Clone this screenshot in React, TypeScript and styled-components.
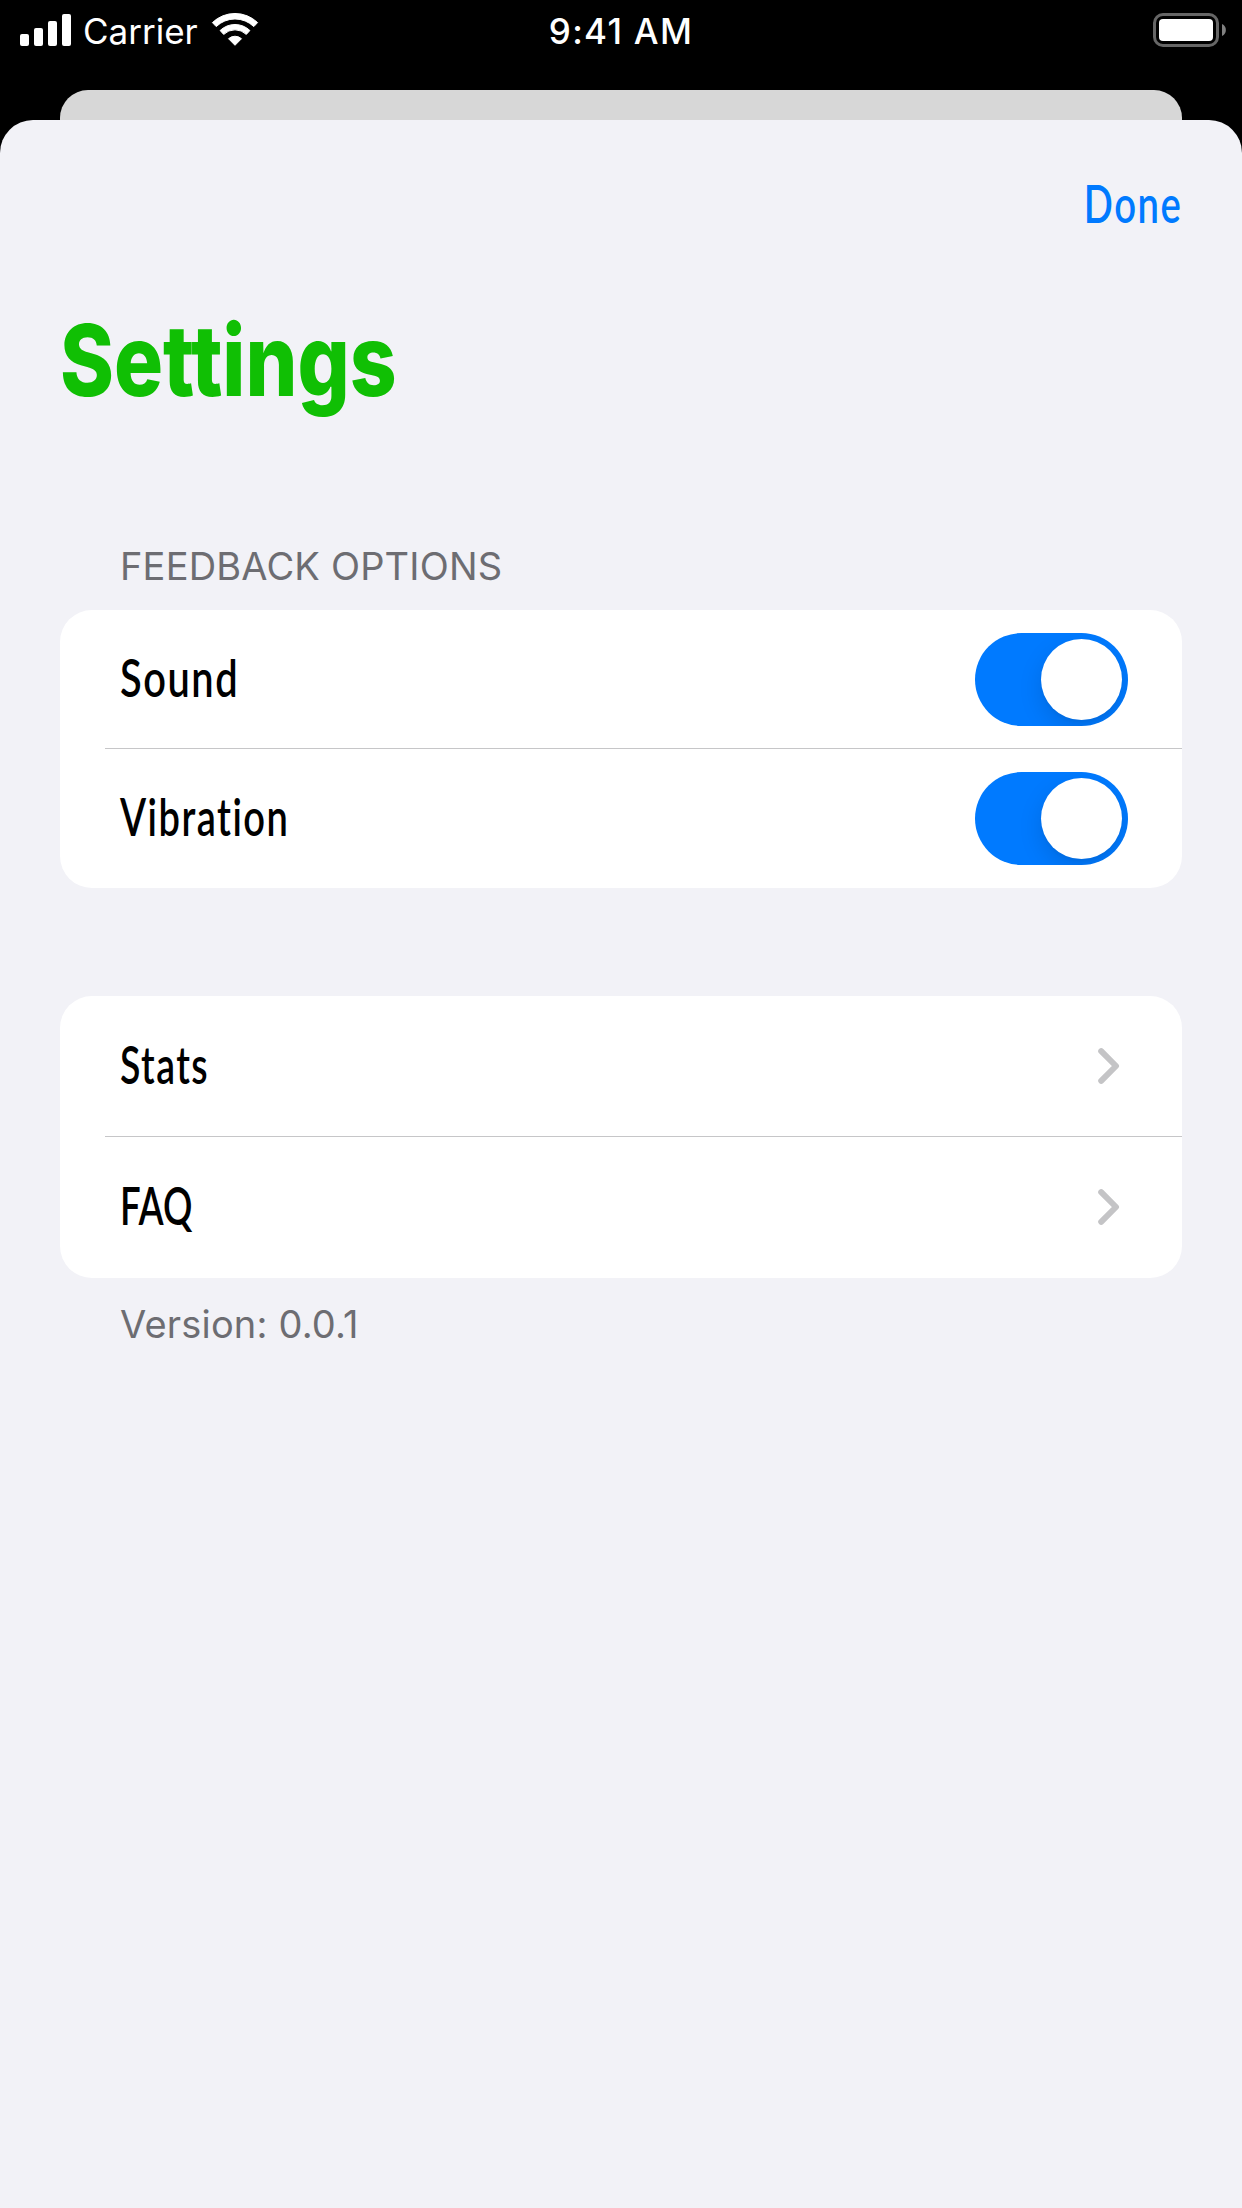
import React, { useState } from "react";
import styled, { createGlobalStyle } from "styled-components";

const GlobalStyle = createGlobalStyle`
  *, *::before, *::after { box-sizing: border-box; }
  html, body { margin: 0; padding: 0; background: #000; }
`;

const uiFont = `Inter, "Liberation Sans", sans-serif`;
const labelFont = `Lato, "Open Sans", sans-serif`;

const Screen = styled.div`
  display: flex;
  flex-direction: column;
  width: 1242px;
  height: 2208px;
  overflow: hidden;
  background: #000;
  font-family: ${uiFont};
`;

const StatusBar = styled.header`
  display: grid;
  grid-template-columns: 1fr auto 1fr;
  grid-template-rows: 60px;
  align-items: center;
  height: 60px;
  padding: 0 20px;
  color: #fff;
  font-size: 35px;
  line-height: 58px;
`;

const StatusLeft = styled.div`
  display: flex;
  align-items: center;
`;

const Carrier = styled.span`
  margin: 0 13px 0 11px;
  padding-top: 2px;
`;

const Time = styled.time`
  padding-top: 2px;
  font-weight: 540;
  letter-spacing: 1.3px;
`;

const BatteryIcon = styled.svg`
  justify-self: end;
  display: block;
  margin-right: -4px;
`;

const BackSheet = styled.div`
  flex: none;
  height: 30px;
  margin: 30px 60px 0;
  border-radius: 28px 28px 0 0;
  background: #d7d7d7;
`;

const Sheet = styled.main`
  flex: 1;
  display: flex;
  flex-direction: column;
  border-radius: 33px 33px 0 0;
  background: #f2f2f7;
  padding: 54px 60px 0;
`;

const DoneButton = styled.button`
  align-self: flex-end;
  height: 60px;
  padding: 0;
  border: 0;
  background: none;
  color: #007aff;
  font: 600 51px/60px ${labelFont};
  letter-spacing: 2px;
  transform: scaleX(0.75);
  transform-origin: right center;
`;

const Title = styled.h1`
  align-self: flex-start;
  margin: 66px 0 0;
  color: #10bf04;
  font: 850 99px/120px ${uiFont};
  transform: scaleX(0.826);
  transform-origin: left center;
`;

const Section = styled.section<{ $gap: number }>`
  display: flex;
  flex-direction: column;
  margin-top: ${(p) => p.$gap}px;
`;

const Caption = styled.p`
  margin: 0;
  padding-left: 60px;
  color: #6d6d72;
  font-size: 38px;
  line-height: 46px;
  letter-spacing: 0.18px;
`;

const Card = styled.div<{ $top?: number; $bottom?: number }>`
  margin: ${(p) => p.$top ?? 0}px 0 ${(p) => p.$bottom ?? 0}px;
  border-radius: 32px;
  overflow: hidden;
  background: #fff;
`;

const LinkCard = styled(Card)`
  padding-bottom: 1px;
`;

const Row = styled.div<{ $height: number; $inset: number }>`
  display: flex;
  align-items: center;
  justify-content: space-between;
  height: ${(p) => p.$height}px;
  padding: 0 ${(p) => p.$inset}px 0 60px;
`;

const Divider = styled.div`
  height: 1px;
  margin-left: 45px;
  background: #c6c6c8;
`;

const Label = styled.span<{ $squeeze: number; $tracking: number }>`
  padding-bottom: 3px;
  color: #000;
  font: 600 51px/60px ${labelFont};
  letter-spacing: ${(p) => p.$tracking}px;
  transform: scaleX(${(p) => p.$squeeze});
  transform-origin: left center;
`;

const Toggle = styled.button<{ $on: boolean }>`
  display: flex;
  justify-content: ${(p) => (p.$on ? "flex-end" : "flex-start")};
  width: 153px;
  height: 93px;
  padding: 6px;
  border: 0;
  border-radius: 47px;
  overflow: hidden;
  background: ${(p) => (p.$on ? "#007aff" : "#e9e9ea")};
`;

const Knob = styled.span`
  width: 81px;
  height: 81px;
  border-radius: 50%;
  background: #fff;
  box-shadow: 0 9px 24px rgba(0, 0, 0, 0.12), 0 3px 3px rgba(0, 0, 0, 0.03);
`;

const ChevronIcon = styled.svg`
  display: block;
`;

const Signal = () => (
  <svg width="52" height="34" viewBox="20 13 52 34" fill="#fff" aria-hidden="true">
    <rect x="20" y="34" width="9" height="12" rx="2" />
    <rect x="34" y="28" width="9" height="18" rx="2" />
    <rect x="48" y="21" width="9" height="25" rx="2" />
    <rect x="62" y="14" width="9" height="32" rx="2" />
  </svg>
);

const Wifi = () => (
  <svg width="48" height="36" viewBox="211 12 48 36" fill="#fff" stroke="#fff" strokeLinejoin="round" aria-hidden="true">
    <path d="M212.4 22.6A32.5 32.5 0 0 1 257.6 22.6L253.8 26.6A27 27 0 0 0 216.2 26.6Z" />
    <path d="M220.1 30.5A21.5 21.5 0 0 1 249.9 30.5L246.3 34.4A16.2 16.2 0 0 0 223.7 34.4Z" />
    <path d="M228.5 38.7A9.8 9.8 0 0 1 241.5 38.7L235 45.3Z" />
  </svg>
);

const Battery = () => (
  <BatteryIcon width="74" height="36" viewBox="1152 12 74 36" aria-hidden="true">
    <rect x="1154.5" y="14.5" width="63" height="31" rx="8.5" fill="none" stroke="#666" strokeWidth="3" />
    <rect x="1159" y="19" width="54" height="22" rx="4" fill="#fff" />
    <path d="M1222 24a6.6 6.6 0 0 1 0 12Z" fill="#808080" />
  </BatteryIcon>
);

const Chevron = () => (
  <ChevronIcon width="22" height="36" viewBox="0 0 22 36" aria-hidden="true">
    <path d="M3.2 3.2L18 18L3.2 32.8" fill="none" stroke="#c4c4c6" strokeWidth="6" strokeLinecap="round" strokeLinejoin="round" />
  </ChevronIcon>
);

type RowProps = { label: string; squeeze: number; tracking?: number; height: number };

const ToggleRow = ({ label, squeeze, tracking = 2, height }: RowProps) => {
  const [on, setOn] = useState(true);
  return (
    <Row $height={height} $inset={54}>
      <Label $squeeze={squeeze} $tracking={tracking}>{label}</Label>
      <Toggle $on={on} role="switch" aria-checked={on} aria-label={label} onClick={() => setOn(!on)}>
        <Knob />
      </Toggle>
    </Row>
  );
};

const LinkRow = ({ label, squeeze, tracking = 2, height }: RowProps) => (
  <Row $height={height} $inset={62}>
    <Label $squeeze={squeeze} $tracking={tracking}>{label}</Label>
    <Chevron />
  </Row>
);

export default function App() {
  return (
    <Screen>
      <GlobalStyle />
      <StatusBar>
        <StatusLeft>
          <Signal />
          <Carrier>Carrier</Carrier>
          <Wifi />
        </StatusLeft>
        <Time>9:41 AM</Time>
        <Battery />
      </StatusBar>
      <BackSheet />
      <Sheet>
        <DoneButton>Done</DoneButton>
        <Title>Settings</Title>
        <Section $gap={123}>
          <Caption>FEEDBACK OPTIONS</Caption>
          <Card $top={21}>
            <ToggleRow label="Sound" squeeze={0.78} height={138} />
            <Divider />
            <ToggleRow label="Vibration" squeeze={0.746} height={139} />
          </Card>
        </Section>
        <Section $gap={108}>
          <LinkCard $bottom={23}>
            <LinkRow label="Stats" squeeze={0.733} height={140} />
            <Divider />
            <LinkRow label="FAQ" squeeze={0.717} tracking={0} height={140} />
          </LinkCard>
          <Caption>Version: 0.0.1</Caption>
        </Section>
      </Sheet>
    </Screen>
  );
}
